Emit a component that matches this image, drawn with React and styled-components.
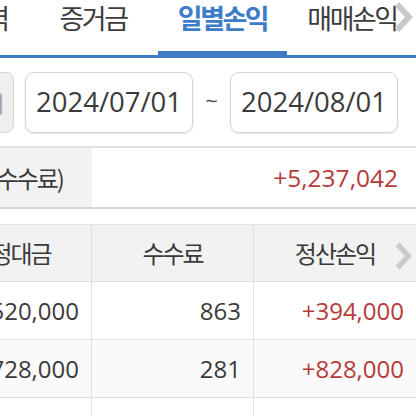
import React from 'react';
import styled, { createGlobalStyle } from 'styled-components';

const GlobalStyle = createGlobalStyle`
  html, body {
    margin: 0;
    padding: 0;
    background: #ffffff;
    overflow: hidden;
  }
  body {
    font-family: "Open Sans", "Noto Sans CJK KR", sans-serif;
    color: #3a3a3a;
  }
`;

const Page = styled.div`
  position: relative;
  width: 416px;
  height: 416px;
  overflow: hidden;
  background: #fff;
`;

const TabBar = styled.div`
  position: relative;
  height: 55px;
  border-bottom: 3px solid #3f7bc3;
`;

const TabStrip = styled.div`
  display: flex;
  margin-left: -102px;
  height: 55px;
`;

const Tab = styled.div`
  flex: 0 0 ${p => p.w || 130}px;
  display: flex;
  align-items: center;
  justify-content: center;
  padding-bottom: 16px;
  box-sizing: border-box;
  font-family: "Noto Sans CJK KR", sans-serif;
  font-size: 27px;
  line-height: 32px;
  letter-spacing: -2.5px;
  font-weight: ${p => (p.active ? 700 : 400)};
  color: ${p => (p.active ? '#3d7cc9' : '#3c3c3c')};
  border-bottom: ${p => (p.active ? '4px solid #3f7bc3' : '4px solid transparent')};
  white-space: nowrap;
`;

const ScrollArrow = styled.div`
  position: absolute;
  right: 2px;
  top: ${p => p.top}px;
  width: 22px;
  height: 34px;
  display: flex;
  align-items: center;
  justify-content: center;
`;

const DateRow = styled.div`
  display: flex;
  align-items: center;
  height: 90px;
  border-bottom: 2px solid #e2e2e2;
  box-sizing: border-box;
`;

const PeriodButton = styled.div`
  flex: 0 0 60px;
  margin-left: -46px;
  height: 61px;
  border: 1px solid #d6d6d6;
  border-radius: 8px;
  background: #efefef;
  box-sizing: border-box;
  display: flex;
  align-items: center;
  justify-content: flex-end;
  padding-right: 9px;
  color: #a0a0a0;
  font-family: "Noto Sans CJK KR", sans-serif;
  font-size: 22px;
  line-height: 28px;
  overflow: hidden;
`;

const DateBox = styled.div`
  flex: 0 0 168px;
  height: 61px;
  margin-left: ${p => p.ml}px;
  border: 1px solid #d4d4d4;
  border-radius: 9px;
  box-shadow: 0 1px 2px rgba(0, 0, 0, 0.12);
  box-sizing: border-box;
  display: flex;
  align-items: center;
  justify-content: center;
  font-size: 27.5px;
  line-height: 36px;
  color: #3a3a3a;
`;

const Tilde = styled.div`
  flex: 0 0 37px;
  text-align: center;
  font-size: 22px;
  color: #555;
  padding-bottom: 4px;
`;

const SumRow = styled.div`
  display: flex;
  height: 61px;
  border-bottom: 2px solid #d8d8d8;
  box-sizing: border-box;
`;

const SumLabel = styled.div`
  flex: 0 0 92px;
  background: #f2f2f2;
  display: flex;
  align-items: center;
  justify-content: flex-end;
  padding-right: 29px;
  box-sizing: border-box;
  white-space: nowrap;
  font-family: "Noto Sans CJK KR", sans-serif;
  font-size: 24px;
  line-height: 30px;
  letter-spacing: -2px;
  color: #3a3a3a;
  overflow: hidden;
`;

const SumValue = styled.div`
  flex: 1;
  display: flex;
  align-items: center;
  justify-content: flex-end;
  padding-right: 18px;
  font-size: 24.5px;
  color: #b73a3a;
`;

const Table = styled.div`
  margin-top: 15px;
  margin-left: -70px;
  width: 486px;
  border-top: 1px solid #e4e4e4;
`;

const Row = styled.div`
  display: grid;
  grid-template-columns: 162px 162px 162px;
  height: ${p => (p.head ? 57 : 58)}px;
  background: ${p => p.bg};
  border-bottom: 1px solid #e0e0e0;
  box-sizing: border-box;
`;

const Cell = styled.div`
  display: flex;
  align-items: center;
  justify-content: ${p => (p.head ? 'center' : 'flex-end')};
  padding-right: ${p => (p.head ? 0 : 12)}px;
  border-right: 1px solid #e0e0e0;
  box-sizing: border-box;
  font-family: ${p => (p.head ? '"Noto Sans CJK KR", sans-serif' : '"Open Sans", sans-serif')};
  font-size: 24px;
  line-height: 30px;
  letter-spacing: ${p => (p.head ? '-2px' : '0')};
  color: ${p => (p.red ? '#b73a3a' : '#3a3a3a')};
  white-space: nowrap;
  &:last-child {
    border-right: none;
  }
`;

const Chevron = ({ w = 20, h = 32 }) => (
  <svg width={w} height={h} viewBox="0 0 20 32">
    <path d="M4 3 L16 16 L4 29" fill="none" stroke="#c9c9c9" strokeWidth="6" strokeLinejoin="miter" strokeLinecap="butt" />
  </svg>
);

const rows = [
  { amount: '1,520,000', fee: '863', pnl: '+394,000', bg: '#ffffff' },
  { amount: '1,728,000', fee: '281', pnl: '+828,000', bg: '#fafafa' },
  { amount: '', fee: '', pnl: '', bg: '#ffffff' },
];

export default function App() {
  return (
    <Page>
      <GlobalStyle />
      <TabBar>
        <TabStrip>
          <Tab>거래내역</Tab>
          <Tab>증거금</Tab>
          <Tab active w={129}>일별손익</Tab>
          <Tab>매매손익</Tab>
        </TabStrip>
        <ScrollArrow top={0}>
          <Chevron />
        </ScrollArrow>
      </TabBar>

      <DateRow>
        <PeriodButton>개</PeriodButton>
        <DateBox ml={11}>2024/07/01</DateBox>
        <Tilde>~</Tilde>
        <DateBox ml={0}>2024/08/01</DateBox>
      </DateRow>

      <SumRow>
        <SumLabel>정산손익(수수료)</SumLabel>
        <SumValue>+5,237,042</SumValue>
      </SumRow>

      <Table>
        <Row head bg="#f2f2f2">
          <Cell head>약정대금</Cell>
          <Cell head>수수료</Cell>
          <Cell head>정산손익</Cell>
        </Row>
        {rows.map((r, i) => (
          <Row key={i} bg={r.bg}>
            <Cell>{r.amount}</Cell>
            <Cell>{r.fee}</Cell>
            <Cell red>{r.pnl}</Cell>
          </Row>
        ))}
      </Table>
      <ScrollArrow top={239}>
        <Chevron w={18} h={30} />
      </ScrollArrow>
    </Page>
  );
}
